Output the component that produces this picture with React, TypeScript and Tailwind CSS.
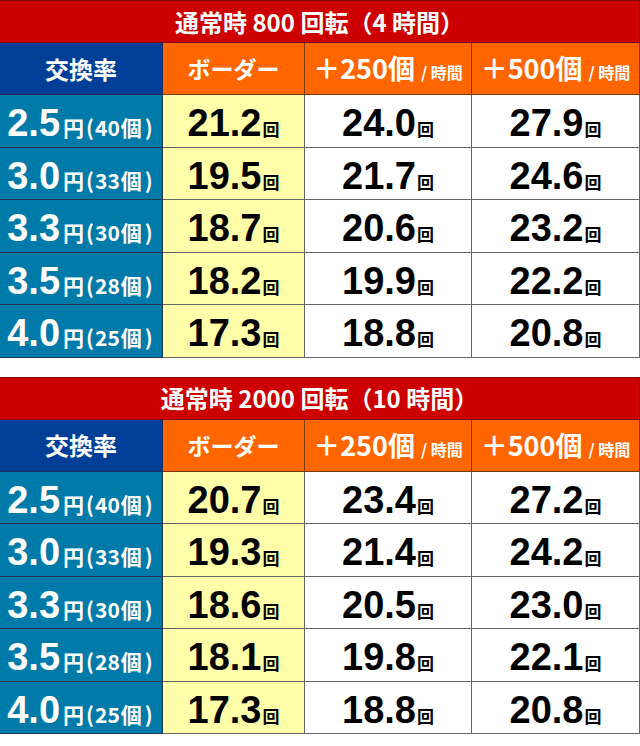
const JP = "font-['Noto_Sans_CJK_JP','Noto_Sans',sans-serif]";
const NUM = "font-['Liberation_Sans','Noto_Sans_CJK_JP',sans-serif]";

type Row = { rate: string; per: string; border: string; a: string; b: string };

const table1: Row[] = [
  { rate: "2.5", per: "40", border: "21.2", a: "24.0", b: "27.9" },
  { rate: "3.0", per: "33", border: "19.5", a: "21.7", b: "24.6" },
  { rate: "3.3", per: "30", border: "18.7", a: "20.6", b: "23.2" },
  { rate: "3.5", per: "28", border: "18.2", a: "19.9", b: "22.2" },
  { rate: "4.0", per: "25", border: "17.3", a: "18.8", b: "20.8" },
];

const table2: Row[] = [
  { rate: "2.5", per: "40", border: "20.7", a: "23.4", b: "27.2" },
  { rate: "3.0", per: "33", border: "19.3", a: "21.4", b: "24.2" },
  { rate: "3.3", per: "30", border: "18.6", a: "20.5", b: "23.0" },
  { rate: "3.5", per: "28", border: "18.1", a: "19.8", b: "22.1" },
  { rate: "4.0", per: "25", border: "17.3", a: "18.8", b: "20.8" },
];

function Value({ v }: { v: string }) {
  return (
    <span className="flex items-baseline pt-[5px]">
      <span className={`${NUM} text-[38px] leading-none font-bold`}>{v}</span>
      <span className={`${JP} text-[17px] leading-none font-bold ml-[1px]`}>回</span>
    </span>
  );
}

function RateTable({ title, rows }: { title: string; rows: Row[] }) {
  return (
    <div className={JP}>
      <div className="h-[43px] bg-[#cc0000] border-t border-b border-r border-[#7a0a0a] flex items-center justify-center text-white font-bold text-[24px]">
        {title}
      </div>
      <div className="grid grid-cols-[163px_142px_167px_168px]">
        <div className="h-[52px] bg-[#003f98] border-r border-b border-[#1c2b55] flex items-center justify-center text-white font-bold text-[24px]">
          交換率
        </div>
        <div className="h-[52px] bg-[#ff6600] border-r border-b border-[#7a3a10] flex items-center justify-center text-white font-bold text-[23px]">
          ボーダー
        </div>
        <div className="h-[52px] bg-[#ff6600] border-r border-b border-[#7a3a10] flex items-baseline justify-center pt-[5px] text-white font-bold">
          <span className="text-[27px]">＋250個</span>
          <span className="text-[16px] ml-[6px]">/ 時間</span>
        </div>
        <div className="h-[52px] bg-[#ff6600] border-r border-b border-[#7a3a10] flex items-baseline justify-center pt-[5px] text-white font-bold">
          <span className="text-[27px]">＋500個</span>
          <span className="text-[16px] ml-[6px]">/ 時間</span>
        </div>
        {rows.map((r) => (
          <>
            <div
              key={r.rate + "r"}
              className="h-[52.5px] bg-[#007aa8] border-r border-b border-[#1e3a4a] flex items-center justify-center text-white font-bold pt-[5px] pr-[2px]"
            >
              <span className="flex items-baseline">
                <span className={`${NUM} text-[38px] leading-none`}>{r.rate}</span>
                <span className="text-[21px] leading-none ml-[3px]">円</span>
                <span className="text-[21px] leading-none ml-[2px]">(</span>
                <span className="text-[21px] leading-none ml-[1px]">{r.per}</span>
                <span className="text-[21px] leading-none ml-[1px]">個</span>
                <span className="text-[21px] leading-none ml-[3px]">)</span>
              </span>
            </div>
            <div
              key={r.rate + "b"}
              className="h-[52.5px] bg-[#ffffaa] border-r border-b border-[#666] flex items-center justify-center text-black"
            >
              <Value v={r.border} />
            </div>
            <div
              key={r.rate + "a"}
              className="h-[52.5px] bg-white border-r border-b border-[#666] flex items-center justify-center text-black"
            >
              <Value v={r.a} />
            </div>
            <div
              key={r.rate + "c"}
              className="h-[52.5px] bg-white border-r border-b border-[#666] flex items-center justify-center text-black"
            >
              <Value v={r.b} />
            </div>
          </>
        ))}
      </div>
    </div>
  );
}

export default function App() {
  return (
    <div className="w-[640px] bg-white">
      <RateTable title="通常時 800 回転（4 時間）" rows={table1} />
      <div className="h-[19px]" />
      <RateTable title="通常時 2000 回転（10 時間）" rows={table2} />
    </div>
  );
}
